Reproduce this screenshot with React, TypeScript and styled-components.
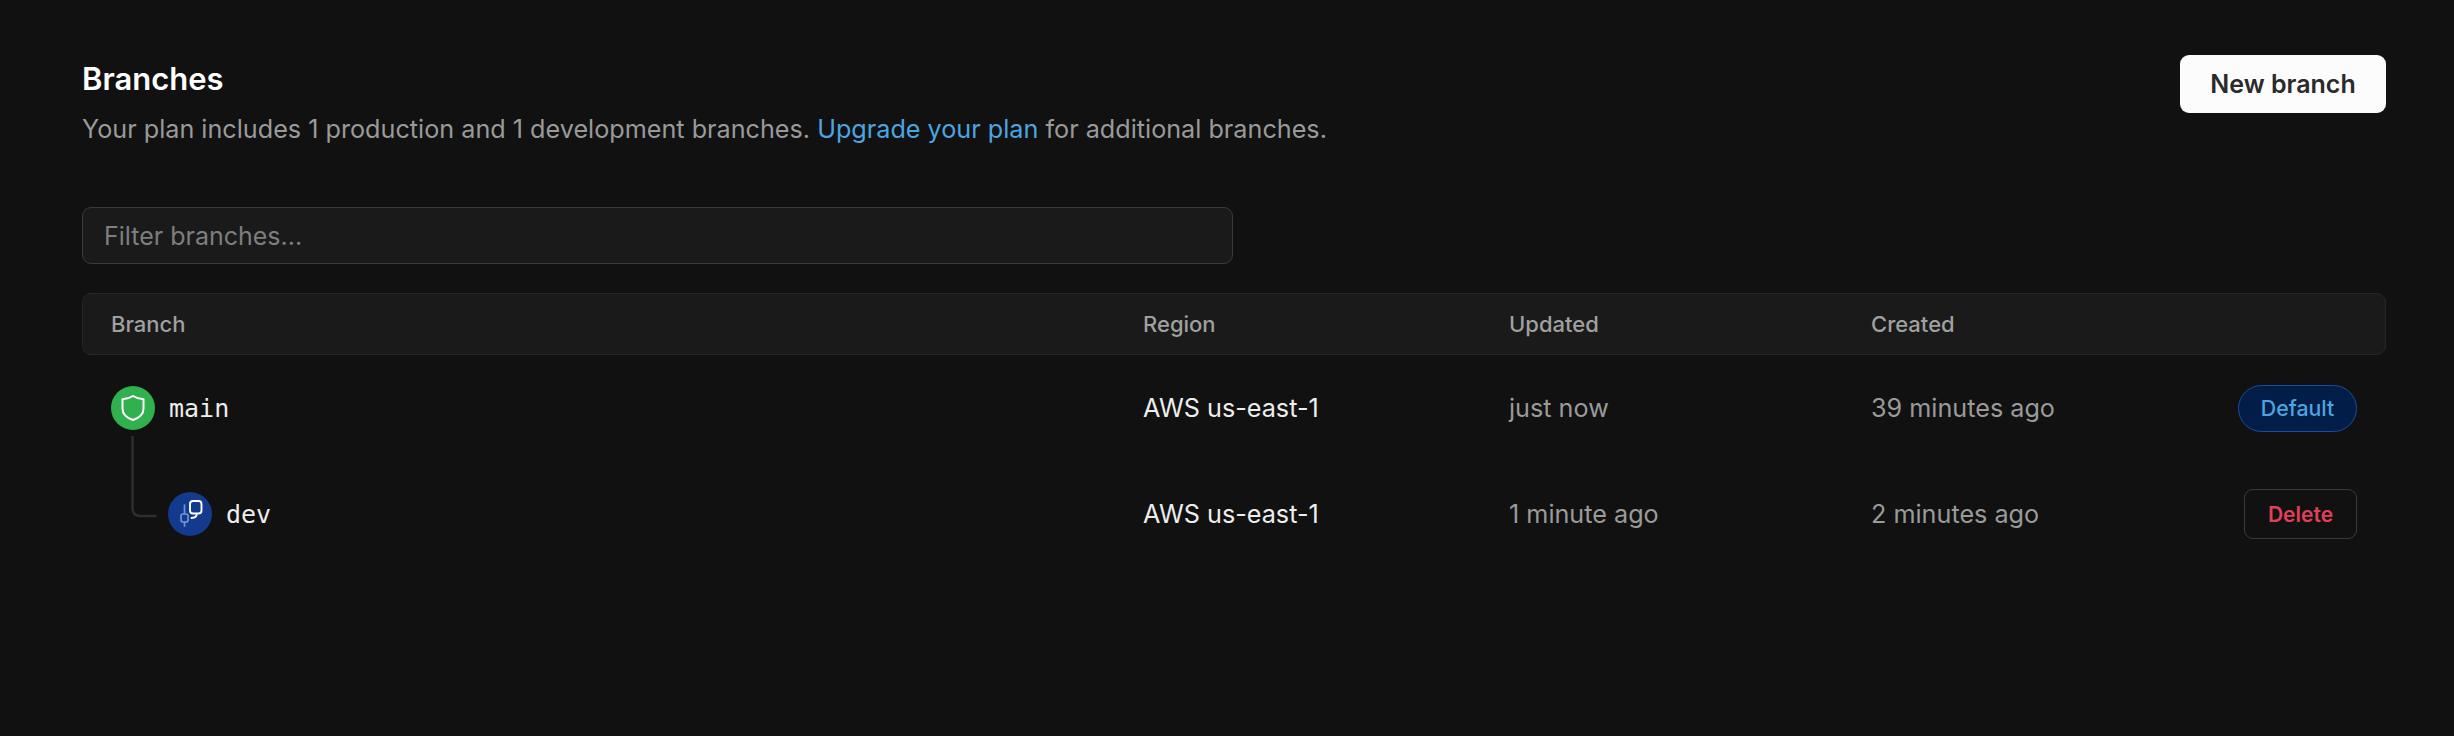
import React from "react";
import styled, { createGlobalStyle } from "styled-components";

const Global = createGlobalStyle`
  html, body { margin: 0; padding: 0; background: #111111; }
  body { font-family: Inter, "Liberation Sans", sans-serif; }
  * { box-sizing: border-box; }
`;

const Page = styled.div`
  width: 2454px;
  height: 736px;
  background: #111111;
  padding: 55px 68px 0 82px;
`;
const Header = styled.header`
  display: flex;
  justify-content: space-between;
  align-items: flex-start;
`;
const Heading = styled.div`
  display: flex;
  flex-direction: column;
`;
const Title = styled.h1`
  margin: 4px 0 0;
  font-size: 31px;
  line-height: 40px;
  font-weight: 600;
  color: #ffffff;
`;
const Subtitle = styled.p`
  margin: 11px 0 0;
  font-size: 25.2px;
  line-height: 38px;
  color: #9a9a9a;
`;
const Link = styled.a`
  color: #4ca5e0;
`;
const PrimaryButton = styled.button`
  width: 206px;
  height: 58px;
  border: 0;
  border-radius: 9px;
  background: #fcfcfc;
  color: #2a2a2a;
  font: 600 25px Inter, sans-serif;
`;
const FilterInput = styled.input`
  display: block;
  width: 1151px;
  height: 57px;
  margin-top: 59px;
  padding: 0 21px;
  background: #1a1a1a;
  border: 1px solid #3a3a3a;
  border-radius: 9px;
  color: #ededed;
  font: 400 25px Inter, sans-serif;
  &::placeholder { color: #7e7e7e; opacity: 1; }
`;
const Table = styled.div`
  margin-top: 29px;
`;
const columns = "1032px 366px 362px 1fr auto";
const HeadRow = styled.div`
  display: grid;
  grid-template-columns: ${columns};
  align-items: center;
  height: 62px;
  padding: 0 28px;
  background: #1a1a1a;
  border: 1px solid #262626;
  border-radius: 9px;
  color: #a0a0a0;
  font-size: 22px;
  font-weight: 500;
`;
const Row = styled.div`
  display: grid;
  grid-template-columns: ${columns};
  align-items: center;
  height: 106px;
  padding: 0 29px;
  font-size: 25.2px;
  color: #9a9a9a;
`;
const Region = styled.div`
  color: #ededed;
`;
const BranchCell = styled.div<{ $child?: boolean }>`
  position: relative;
  display: flex;
  align-items: center;
  gap: 14px;
  padding-left: ${(p) => (p.$child ? "57px" : "0")};
`;
const Badge = styled.span<{ $bg: string }>`
  display: flex;
  flex: none;
  width: 44px;
  height: 44px;
  border-radius: 50%;
  background: ${(p) => p.$bg};
`;
const BranchName = styled.span`
  font-family: "DejaVu Sans Mono", "Liberation Mono", monospace;
  font-size: 25px;
  color: #ededed;
`;
const Connector = styled.svg`
  position: absolute;
  left: 20px;
  top: -56px;
`;
const ActionCell = styled.div`
  display: flex;
  justify-content: flex-end;
`;
const DefaultPill = styled.span`
  display: flex;
  align-items: center;
  justify-content: center;
  width: 119px;
  height: 47px;
  border: 1px solid #164f9c;
  border-radius: 24px;
  background: #021d48;
  color: #4ca5e0;
  font-size: 21.3px;
  font-weight: 500;
`;
const DeleteButton = styled.button`
  width: 113px;
  height: 50px;
  border: 1px solid #3a3a3a;
  border-radius: 9px;
  background: #111111;
  color: #e04058;
  font: 600 21px Inter, sans-serif;
`;

export default function App() {
  return (
    <Page>
      <Global />
      <Header>
        <Heading>
          <Title>Branches</Title>
          <Subtitle>
            Your plan includes 1 production and 1 development branches. <Link>Upgrade your plan</Link> for additional branches.
          </Subtitle>
        </Heading>
        <PrimaryButton>New branch</PrimaryButton>
      </Header>
      <FilterInput placeholder="Filter branches..." />
      <Table>
        <HeadRow>
          <div>Branch</div>
          <div>Region</div>
          <div>Updated</div>
          <div>Created</div>
          <div />
        </HeadRow>
        <Row>
          <BranchCell>
            <Badge $bg="#30b14e">
              <svg width="44" height="44" viewBox="0 0 44 44" fill="none" stroke="#fff" strokeWidth="2" strokeLinejoin="round">
                <path d="M22 10c3 2 6.500 3 10.500 3.200v9.300c0 5.500-4 9.300-10.500 11.500-6.500-2.200-10.500-6-10.500-11.500v-9.300c4-.2 7.500-1.200 10.500-3.200z" />
              </svg>
            </Badge>
            <BranchName>main</BranchName>
          </BranchCell>
          <Region>AWS us-east-1</Region>
          <div>just now</div>
          <div>39 minutes ago</div>
          <ActionCell>
            <DefaultPill>Default</DefaultPill>
          </ActionCell>
        </Row>
        <Row>
          <BranchCell $child>
            <Connector width="30" height="84" viewBox="0 0 30 84" fill="none" stroke="#2e2e2e" strokeWidth="2.500">
              <path d="M1.500 0v72q0 8 8 8h16" />
            </Connector>
            <Badge $bg="#133a8c">
              <svg width="44" height="44" viewBox="0 0 44 44" fill="none" strokeLinejoin="round" strokeLinecap="round">
                <path d="M16.500 13v9M16.500 30v4" stroke="#6f94dc" strokeWidth="1.700" />
                <rect x="13" y="22" width="7" height="8" rx="2" stroke="#6f94dc" strokeWidth="1.700" />
                <path d="M29 21.500h1.500a3 3 0 0 0 3-3V12a3 3 0 0 0-3-3H25a3 3 0 0 0-3 3v6.500a3 3 0 0 0 3 3h3.500v1.500q0 2.500-5 3" stroke="#fff" strokeWidth="1.900" />
              </svg>
            </Badge>
            <BranchName>dev</BranchName>
          </BranchCell>
          <Region>AWS us-east-1</Region>
          <div>1 minute ago</div>
          <div>2 minutes ago</div>
          <ActionCell>
            <DeleteButton>Delete</DeleteButton>
          </ActionCell>
        </Row>
      </Table>
    </Page>
  );
}
